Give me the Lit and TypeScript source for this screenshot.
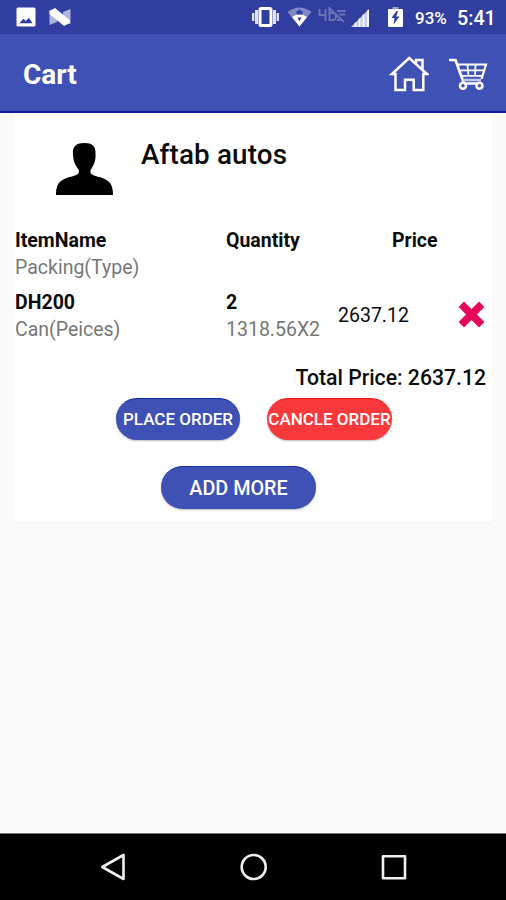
import { LitElement, html, css, svg } from "lit";
import { customElement, property } from "lit/decorators.js";

@customElement("status-bar")
class StatusBar extends LitElement {
  static styles = css`
    :host { display: flex; height: 34px; background: #303f9f; color: #fff; align-items: center; box-sizing: border-box; padding: 0 11px 0 16px; }
    svg { display: block; flex: none; }
    .n { margin-left: 13px; }
    .right { margin-left: auto; display: flex; align-items: center; }
    .wifi { margin-left: 8px; }
    .lte { margin-left: 6px; }
    .signal { margin-left: 5px; }
    .battery { margin-left: 19px; }
    .pct { margin-left: 12px; width: 42px; font-size: 17px; font-weight: 500; line-height: 34px; padding-top: 1px; height: 34px; box-sizing: border-box; white-space: nowrap; }
    .time { width: 38px; font-size: 19.7px; font-weight: 500; line-height: 37px; height: 34px; white-space: nowrap; }
  `;
  render() {
    return html`
      <svg width="20" height="20" viewBox="0 0 20 20"><path fill="#fff" fill-rule="evenodd" d="M2 0.5H18Q19.5 .5 19.5 2V18Q19.5 19.5 18 19.5H2Q.5 19.5 .5 18V2Q.5.5 2 .5ZM3.3 16.3H16.5L13 10.8 9.8 14 7.5 11.7Z"/></svg>
      <svg class="n" width="22" height="18" viewBox="0 0 22 18"><path fill="#aeb5de" d="M.5 2 8 5V14L.5 17ZM14 4 21.5 1V16L14 13Z"/><path fill="#fff" d="M.5 3 6 0 21 12.5V15L15 18 .5 6Z"/></svg>
      <div class="right">
        <svg width="27" height="20" viewBox="0 0 27 20"><path fill="#dfe3f5" d="M0 6H2.4V14H0ZM3 3H6V17H3ZM24.6 6H27V14H24.6ZM21 3H24V17H21Z"/><rect x="8" y="1.5" width="11" height="17" rx="1" fill="none" stroke="#fff" stroke-width="3"/></svg>
        <svg class="wifi" width="25" height="20" viewBox="0 0 25 20"><path fill="#7e88c5" d="M.5 5Q12.5-4 24.5 5L12.5 19.5Z"/><path fill="#fff" d="M5 10Q12.5 4.5 20 10L12.5 19.5Z"/><path fill="#303f9f" d="M9 5 12.5 2.5 16 5 14.7 7.6H10.2ZM10.5 10.5H14.5L12.5 14.5Z"/></svg>
        <svg class="lte" width="28" height="20" viewBox="0 0 28 20"><path fill="none" stroke="#6772b9" stroke-width="2" d="M1.5 2V8H8.5M7.5 2V14M11.5 1V13H14Q18 13 18 9.5 18 6 15 6H11.5M10 0 26 15M19 4H27.5M21 7.5H27.5M19 13H24"/></svg>
        <svg class="signal" width="18" height="20" viewBox="0 0 18 20"><path fill="#c7cceb" d="M0 20 18 2V20Z"/><path stroke="#fff" stroke-width="1.6" d="M4.5 15.5V20M8.5 11.5V20M12.5 7.5V20M17 3V20"/></svg>
        <svg class="battery" width="15" height="20" viewBox="0 0 15 20"><path fill="#9aa3d5" d="M4.5 0H10.5V3H4.5Z"/><rect y="2" width="15" height="18" rx="1" fill="#fff"/><path fill="#303f9f" d="M8.5 4 3.5 11H6.5L5.5 17.5 11.5 9.5H8.2L10 4Z"/></svg>
        <span class="pct">93%</span><span class="time">5:41</span>
      </div>`;
  }
}

@customElement("app-bar")
class AppBar extends LitElement {
  static styles = css`
    :host { display: flex; height: 79px; box-sizing: border-box; background: #3f51b5; border-bottom: 2px solid #111c98; color: #fff; align-items: center; padding: 2px 18px 0 23px; }
    .title { font-size: 28px; line-height: 40px; font-weight: 700; margin-right: auto; padding-top: 2px; }
    svg { display: block; margin-top: 1px; }
    .cart { margin-left: 19px; }
  `;
  render() {
    return html`
      <span class="title">Cart</span>
      <svg width="40" height="38" viewBox="0 0 40 38" fill="none" stroke="#fff" stroke-width="2.5"><path d="M3 19 20.2 3 38 19H34.3V35H24.7V24.8H16V35H6.5V19ZM27 8V5H33.5V14"/></svg>
      <svg class="cart" width="40" height="38" viewBox="0 0 40 38" fill="none" stroke="#fff"><path stroke-width="2.7" d="M1 5H7.5L16 28.5H32"/><path stroke-width="2.2" d="M9 9.5H38L33.5 24"/><path stroke-width="1.8" d="M11 15.3H35.5M13 20.8H34M19.5 10 20.5 21M27.5 10 27 21"/><path stroke="#c3c9e9" stroke-width="2.5" d="M15 25H33"/><circle cx="15" cy="30.8" r="3" stroke-width="2.5" fill="#3f51b5"/><circle cx="31.5" cy="30.8" r="3" stroke-width="2.5" fill="#3f51b5"/></svg>`;
  }
}

@customElement("cart-card")
class CartCard extends LitElement {
  @property({ attribute: false }) items = [
    { name: "DH200", pack: "Can(Peices)", qty: "2", calc: "1318.56X2", price: "2637.12" },
  ];
  static styles = css`
    :host { display: block; box-sizing: border-box; margin: 0 14px; height: 409px; background: #fff; color: #0c0c0c; border-radius: 0 0 2px 2px; box-shadow: 0 1px 1px #f4f4f4; }
    .shop { display: flex; height: 114px; align-items: flex-start; }
    .person { display: block; margin: 29px 28px 0 42px; }
    .name { font-size: 27.8px; font-weight: 500; line-height: 36px; padding-top: 24px; letter-spacing: .15px; }
    .row { display: grid; grid-template-columns: 211px 112px 1fr 34px; padding-left: 1px; height: 62px; font-size: 19.5px; line-height: 27px; white-space: nowrap; }
    b { display: block; font-weight: 700; }
    .sub { display: block; color: #777; margin-top: -0.5px; }
    .head { padding-left: 54px; }
    .amount { padding-top: 13px; }
    .x { padding-top: 12px; }
    svg { display: block; }
    .total { text-align: right; height: 21px; padding: 13px 6px 0 0; font-size: 21.2px; line-height: 27px; font-weight: 500; }
    .actions { display: flex; gap: 27px; padding: 13px 0 0 102px; }
    button { border: 0; padding: 0 0 2px; width: 124px; height: 42px; border-radius: 21px; background: #3f51b5; color: #fff; font: 500 17px Roboto, sans-serif; white-space: nowrap; box-shadow: 0 1px 2px #0004; border-top: 1px solid #152ba0; }
    .cancel { width: 125px; background: #f9393c; border-top-color: #f01418; }
    .more { display: block; width: 155px; height: 43px; margin: 26px 0 0 147px; padding: 0; font-size: 19.8px; border-radius: 22px; }
  `;
  render() {
    return html`
      <div class="shop">
        <svg class="person" width="57" height="54" viewBox="0 0 57 54"><path fill="#000" d="M17 12C16 4 21 1 28.5 1S40 4 39.5 12C40 20 37 24 34.5 28V31C37 35 46 34 52 39 56 42 57 47 57 53H0C0 47 1 42 5 39 11 34 20 35 22.8 31V28C20 24 17 20 17 12Z"/></svg>
        <span class="name">Aftab autos</span>
      </div>
      <div class="row">
        <div><b>ItemName</b><span class="sub">Packing(Type)</span></div>
        <b>Quantity</b><b class="head">Price</b>
      </div>
      ${this.items.map((i) => html`
        <div class="row">
          <div><b>${i.name}</b><span class="sub">${i.pack}</span></div>
          <div><b>${i.qty}</b><span class="sub">${i.calc}</span></div>
          <span class="amount">${i.price}</span>
          <span class="x"><svg width="27" height="27" viewBox="0 0 27 27"><path stroke="#e8085a" stroke-width="7.6" d="M3.3 3.3 23.7 23.7M23.7 3.3 3.3 23.7"/></svg></span>
        </div>`)}
      <div class="total">Total Price: 2637.12</div>
      <div class="actions"><button>PLACE ORDER</button><button class="cancel">CANCLE ORDER</button></div>
      <button class="more">ADD MORE</button>`;
  }
}

@customElement("nav-bar")
class NavBar extends LitElement {
  static styles = css`
    :host { display: flex; height: 67px; box-sizing: border-box; background: #000; border-top: 1px solid #777; align-items: center; justify-content: center; gap: 112px; padding: 0 0 1px 2px; }
    svg { display: block; }
  `;
  icon(shape: unknown) {
    return html`<svg width="28" height="28" viewBox="0 0 28 28" fill="none" stroke="#efefef" stroke-width="2.6" stroke-linejoin="round">${shape}</svg>`;
  }
  render() {
    return html`
      ${this.icon(svg`<path d="M2.3 14 23.5 2V26Z"/>`)}
      ${this.icon(svg`<circle cx="13.7" cy="14" r="12"/>`)}
      ${this.icon(svg`<rect x="3" y="3.2" width="22" height="22"/>`)}`;
  }
}

@customElement("app-root")
class AppRoot extends LitElement {
  static styles = css`
    :host { display: flex; flex-direction: column; height: 900px; background: #fafafa; font-family: Roboto, sans-serif; overflow: hidden; }
    nav-bar { margin-top: auto; }
  `;
  render() {
    return html`<status-bar></status-bar><app-bar></app-bar><cart-card></cart-card><nav-bar></nav-bar>`;
  }
}
